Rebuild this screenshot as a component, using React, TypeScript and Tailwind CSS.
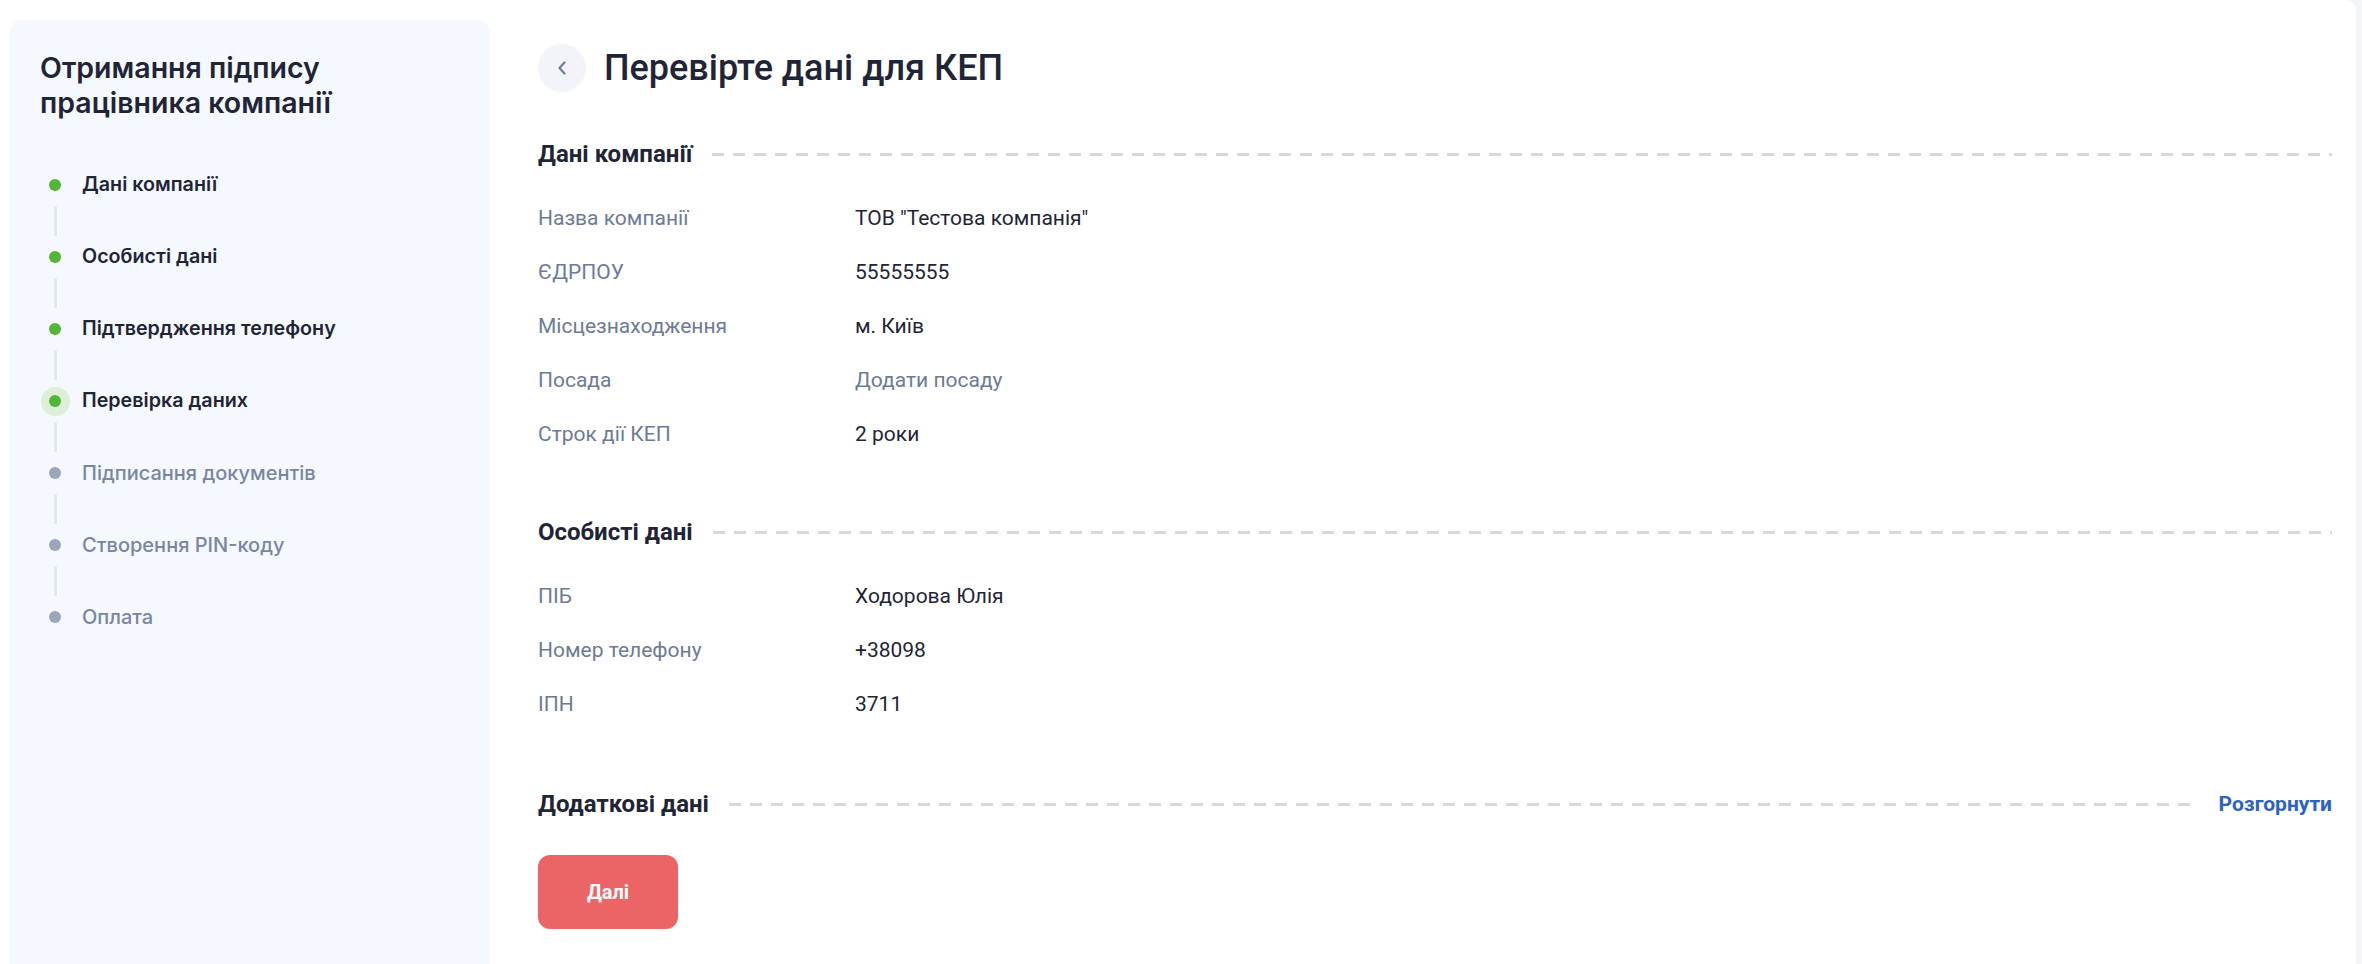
import { Fragment } from "react";

type StepState = "done" | "active" | "todo";

interface Step {
  label: string;
  state: StepState;
}

const steps: Step[] = [
  { label: "Дані компанії", state: "done" },
  { label: "Особисті дані", state: "done" },
  { label: "Підтвердження телефону", state: "done" },
  { label: "Перевірка даних", state: "active" },
  { label: "Підписання документів", state: "todo" },
  { label: "Створення PIN-коду", state: "todo" },
  { label: "Оплата", state: "todo" },
];

const companyRows = [
  { label: "Назва компанії", value: 'ТОВ "Тестова компанія"' },
  { label: "ЄДРПОУ", value: "55555555" },
  { label: "Місцезнаходження", value: "м. Київ" },
  { label: "Посада", value: "Додати посаду", muted: true },
  { label: "Строк дії КЕП", value: "2 роки" },
];

const personalRows = [
  { label: "ПІБ", value: "Ходорова Юлія" },
  { label: "Номер телефону", value: "+38098" },
  { label: "ІПН", value: "3711" },
];

const Dashes = () => (
  <div className="flex-1 h-[3px] bg-[repeating-linear-gradient(90deg,#d5d8df_0_12px,transparent_12px_21px)]" />
);

const SectionTitle = ({ title, action }: { title: string; action?: string }) => (
  <div className="flex items-center h-[28px] gap-[20px]">
    <h2 className="text-[24px] font-bold text-[#1f2536] leading-none">{title}</h2>
    <Dashes />
    {action && (
      <button className="text-[21px] font-bold text-[#2c62c6] leading-none">{action}</button>
    )}
  </div>
);

const Rows = ({ rows }: { rows: { label: string; value: string; muted?: boolean }[] }) => (
  <div className="mt-[24px]">
    {rows.map((r) => (
      <div key={r.label} className="flex items-center h-[54px] text-[21px]">
        <span className="w-[317px] text-[#6d7b96]">{r.label}</span>
        <span className={r.muted ? "text-[#6d7b96]" : "text-[#1f2536]"}>{r.value}</span>
      </div>
    ))}
  </div>
);

const Sidebar = () => (
  <aside className="w-[480px] mt-[20px] shrink-0 bg-[#f5f8fe] rounded-t-[12px] px-[30px] pt-[30px] font-['Inter',sans-serif]">
    <h1 className="text-[28.5px] leading-[35px] font-semibold text-[#1f2536]">
      Отримання підпису
      <br />
      працівника компанії
    </h1>
    <ul className="mt-[51px]">
      {steps.map((s, i) => (
        <Fragment key={s.label}>
          <li className="flex items-center h-[28px]">
            <div className="w-[30px] flex justify-center">
              <div
                className={
                  s.state === "active"
                    ? "w-[29px] h-[29px] rounded-full bg-[#ddefd7] flex items-center justify-center"
                    : "w-[29px] h-[29px] flex items-center justify-center"
                }
              >
                <div
                  className={
                    s.state === "todo"
                      ? "w-[12px] h-[12px] rounded-full bg-[#9ba6bb]"
                      : "w-[12px] h-[12px] rounded-full bg-[#52b535]"
                  }
                />
              </div>
            </div>
            <span
              className={
                s.state === "todo"
                  ? "ml-[12px] text-[20px] font-medium text-[#7886a2]"
                  : "ml-[12px] text-[19.7px] font-semibold text-[#1f2536]"
              }
            >
              {s.label}
            </span>
          </li>
          {i < steps.length - 1 && (
            <li className="h-[44px] w-[30px] flex items-center justify-center">
              <div className="w-[3px] h-[30px] rounded-full bg-[#e2e7f0]" />
            </li>
          )}
        </Fragment>
      ))}
    </ul>
  </aside>
);

export default function App() {
  return (
    <div className="h-[964px] bg-[#f4f5f8] overflow-hidden">
      <div className="w-[2356px] h-full bg-white rounded-tr-[10px] flex pl-[10px]">
        <Sidebar />
        <main className="flex-1 ml-[48px] mr-[24px] pt-[44px] font-['Roboto',sans-serif]">
          <div className="flex items-center h-[48px] gap-[18px]">
            <button className="w-[48px] h-[48px] rounded-full bg-[#f2f4f9] flex items-center justify-center">
              <svg width="10" height="16" viewBox="0 0 10 16" fill="none">
                <path
                  d="M7.5 2.5 L2.5 8 L7.5 13.5"
                  stroke="#6e7c99"
                  strokeWidth="2.2"
                  strokeLinecap="round"
                  strokeLinejoin="round"
                />
              </svg>
            </button>
            <h1 className="text-[36px] font-medium text-[#1f2536] leading-none">
              Перевірте дані для КЕП
            </h1>
          </div>

          <div className="mt-[48px]">
            <SectionTitle title="Дані компанії" />
            <Rows rows={companyRows} />
          </div>

          <div className="mt-[56px]">
            <SectionTitle title="Особисті дані" />
            <Rows rows={personalRows} />
          </div>

          <div className="mt-[58px]">
            <SectionTitle title="Додаткові дані" action="Розгорнути" />
          </div>

          <button className="mt-[37px] w-[140px] h-[74px] rounded-[12px] bg-[#ec6566] text-white text-[20px] font-bold">
            Далі
          </button>
        </main>
      </div>
    </div>
  );
}
